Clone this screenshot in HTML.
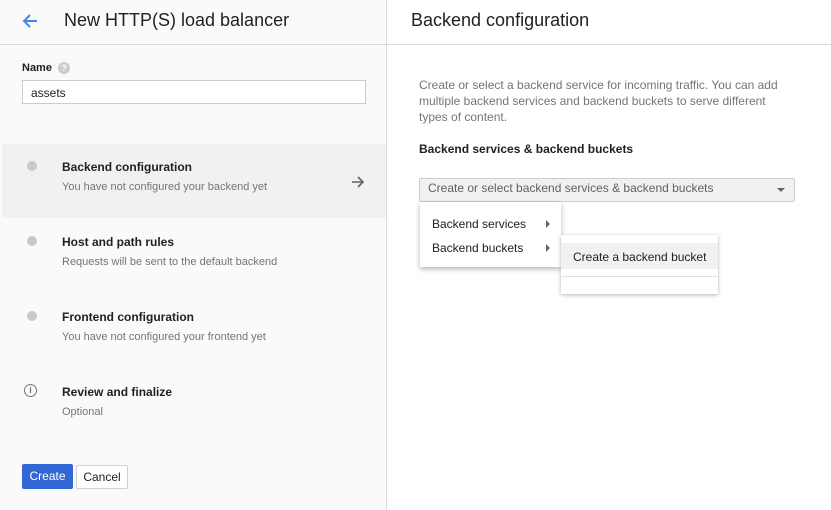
<!DOCTYPE html>
<html><head><style>
*{margin:0;padding:0;box-sizing:border-box}
body{width:831px;height:510px;overflow:hidden;background:#fff;font-family:"Liberation Sans",Arial,sans-serif;position:relative;color:#212121}
.a{position:absolute;white-space:nowrap}
.t{font-size:12px;font-weight:bold;color:#212121}
.s{font-size:11px;color:#757575}
.dot{position:absolute;width:10px;height:10px;border-radius:50%;background:#c8c8c8}
</style></head><body>
<div class="a" style="left:0;top:0;width:387px;height:510px;background:#fafafa;border-right:1px solid #dcdcdc"></div>
<div class="a" style="left:0;top:44px;width:831px;height:1px;background:#dcdcdc"></div>
<svg class="a" style="left:21px;top:12px" width="18" height="18" viewBox="0 0 18 18"><path d="M16 9H3M9 3L3 9l6 6" stroke="#4285f4" stroke-width="2" fill="none"/></svg>
<div class="a" style="left:64px;top:10px;font-size:18px;color:#212121">New HTTP(S) load balancer</div>
<div class="a" style="left:411px;top:10px;font-size:18px;color:#212121">Backend configuration</div>
<div class="a t" style="left:22px;top:62px;font-size:11px">Name</div>
<div class="a" style="left:58px;top:62px;width:12px;height:12px;border-radius:50%;background:#ccc;color:#fff;font-size:9px;text-align:center;line-height:12px;font-weight:bold">?</div>
<div class="a" style="left:22px;top:80px;width:344px;height:24px;border:1px solid #ccc;background:#fff;font-size:12px;padding:5px 8px">assets</div>
<div class="a" style="left:2px;top:144px;width:384px;height:74px;background:#f1f1f1"></div>
<div class="dot" style="left:27px;top:161px"></div>
<div class="a t" style="left:62px;top:160px">Backend configuration</div>
<div class="a s" style="left:62px;top:181px">You have not configured your backend yet</div>
<svg class="a" style="left:351px;top:175px" width="14" height="14" viewBox="0 0 14 14"><path d="M1 7h11M7 2l5 5-5 5" stroke="#616161" stroke-width="1.6" fill="none"/></svg>
<div class="dot" style="left:27px;top:236px"></div>
<div class="a t" style="left:62px;top:235px">Host and path rules</div>
<div class="a s" style="left:62px;top:256px">Requests will be sent to the default backend</div>
<div class="dot" style="left:27px;top:311px"></div>
<div class="a t" style="left:62px;top:310px">Frontend configuration</div>
<div class="a s" style="left:62px;top:331px">You have not configured your frontend yet</div>
<div class="a" style="left:24px;top:384px;width:13px;height:13px;border:1.5px solid #757575;border-radius:50%;font-size:9px;color:#757575;text-align:center;line-height:10px;font-weight:bold">i</div>
<div class="a t" style="left:62px;top:385px">Review and finalize</div>
<div class="a s" style="left:62px;top:406px">Optional</div>
<div class="a" style="left:22px;top:464px;width:51px;height:25px;background:#3367d6;border-radius:2px;color:#fff;font-size:12px;text-align:center;line-height:25px">Create</div>
<div class="a" style="left:76px;top:465px;width:52px;height:24px;background:#fff;border:1px solid #d0d0d0;border-radius:2px;font-size:12px;text-align:center;line-height:22px">Cancel</div>
<div class="a" style="left:419px;top:77px;font-size:12px;color:#757575;line-height:16px">Create or select a backend service for incoming traffic. You can add<br>multiple backend services and backend buckets to serve different<br>types of content.</div>
<div class="a t" style="left:419px;top:142px">Backend services &amp; backend buckets</div>
<div class="a" style="left:419px;top:178px;width:376px;height:24px;background:#f1f1f1;border:1px solid #ccc;border-radius:2px;font-size:12px;color:#616161;padding:2px 8px">Create or select backend services &amp; backend buckets</div>
<div class="a" style="left:777px;top:188px;width:0;height:0;border-left:4px solid transparent;border-right:4px solid transparent;border-top:4px solid #666"></div>
<div class="a" style="left:420px;top:202px;width:141px;height:65px;background:#fff;box-shadow:0 2px 5px rgba(0,0,0,.3)"></div>
<div class="a" style="left:432px;top:217px;font-size:12px">Backend services</div>
<div class="a" style="left:432px;top:241px;font-size:12px">Backend buckets</div>
<div class="a" style="left:546px;top:220px;border-top:4px solid transparent;border-bottom:4px solid transparent;border-left:4px solid #666"></div>
<div class="a" style="left:546px;top:244px;border-top:4px solid transparent;border-bottom:4px solid transparent;border-left:4px solid #666"></div>
<div class="a" style="left:561px;top:235px;width:157px;height:59px;background:#fff;box-shadow:0 1px 4px rgba(0,0,0,.3)"></div>
<div class="a" style="left:561px;top:243px;width:157px;height:26px;background:#f1f1f1"></div>
<div class="a" style="left:561px;top:276px;width:157px;height:1px;background:#e0e0e0"></div>
<div class="a" style="left:573px;top:250px;font-size:12px">Create a backend bucket</div>
</body></html>
